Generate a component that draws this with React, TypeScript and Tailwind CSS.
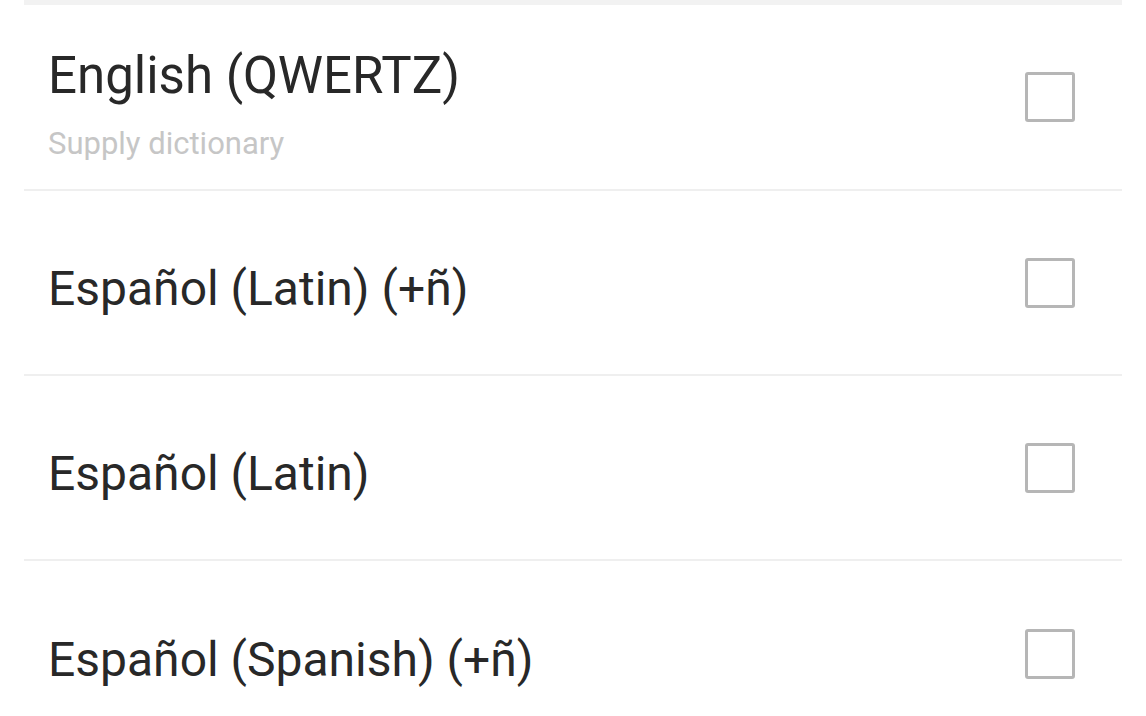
import React from "react";

function Checkbox() {
  return (
    <div className="w-[50px] h-[50px] shrink-0 rounded-[3px] border-[3px] border-[#b6b6b6] bg-white" />
  );
}

function Row({ title, last }: { title: string; last?: boolean }) {
  return (
    <div
      className={`h-[185px] mx-[24px] flex items-center justify-between pl-[24px] pr-[47px] ${
        last ? "" : "border-b-2 border-[#efefef]"
      }`}
    >
      <div className="mt-[12px] text-[48px] leading-[56px] text-[#282828]">{title}</div>
      <Checkbox />
    </div>
  );
}

export default function App() {
  return (
    <div
      className="w-[1146px] h-[716px] overflow-hidden bg-white"
      style={{ fontFamily: "Roboto, 'Noto Sans', sans-serif" }}
    >
      <div className="h-[5px] mx-[24px] bg-[#f2f2f2]" />
      <div className="h-[186px] mx-[24px] flex items-center justify-between pl-[24px] pr-[47px] border-b-2 border-[#efefef]">
        <div className="mt-[16px] flex flex-col">
          <div className="text-[51px] leading-[56px] text-[#282828]">English (QWERTZ)</div>
          <div className="mt-[22px] text-[31px] leading-[36px] text-[#c6c6c6]">Supply dictionary</div>
        </div>
        <Checkbox />
      </div>
      <Row title="Español (Latin) (+ñ)" />
      <Row title="Español (Latin)" />
      <Row title="Español (Spanish) (+ñ)" last />
    </div>
  );
}
